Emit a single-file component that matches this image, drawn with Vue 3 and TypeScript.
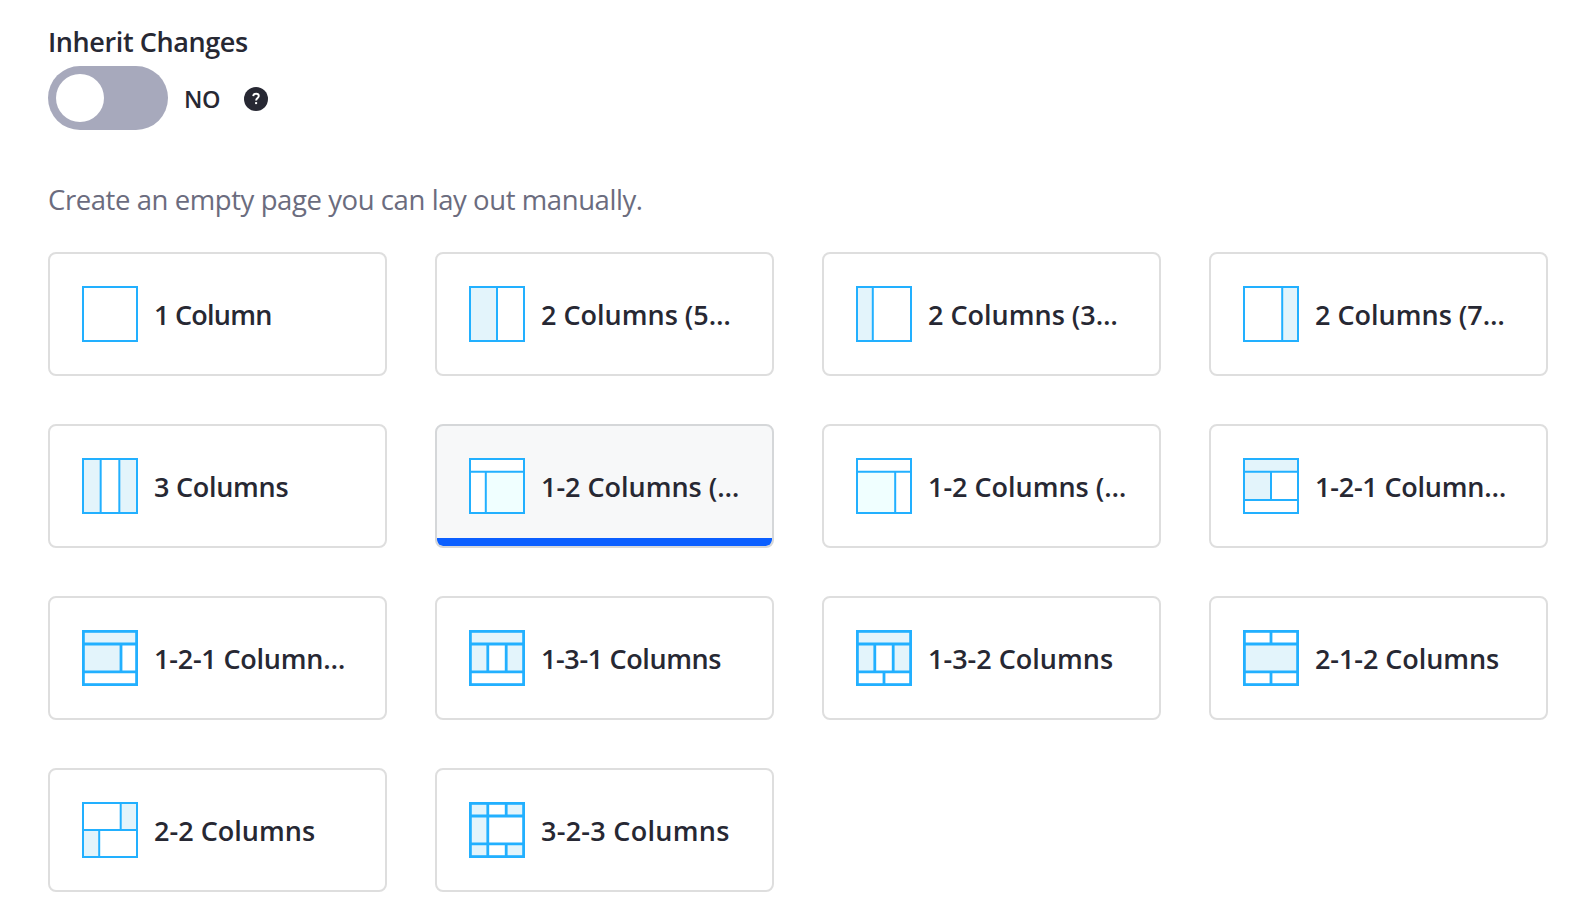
<script setup lang="ts">
interface Template {
  name: string
  // Letter spacing of the label in pixels
  tracking: number
  thick?: boolean
  tint?: string
  // Filled cells as [x, y, width, height]
  fills: number[][]
  lines: string
}

const templates: Template[] = [
  { name: '1 Column', tracking: -0.75, fills: [], lines: '' },
  { name: '2 Columns (5…', tracking: 0, fills: [[0, 0, 28, 56]], lines: 'M28 0V56' },
  { name: '2 Columns (3…', tracking: 0, fills: [[0, 0, 16.8, 56]], lines: 'M16.8 0V56' },
  { name: '2 Columns (7…', tracking: 0, fills: [[39.2, 0, 16.8, 56]], lines: 'M39.2 0V56' },
  { name: '3 Columns', tracking: -0.28, fills: [[0, 0, 18.67, 56], [37.33, 0, 18.67, 56]], lines: 'M18.67 0V56M37.33 0V56' },
  { name: '1-2 Columns (…', tracking: -0.02, tint: '#f0ffff', fills: [[16.8, 13.7, 39.2, 42.3]], lines: 'M0 13.7H56M16.8 13.7V56' },
  { name: '1-2 Columns (…', tracking: -0.02, tint: '#f0ffff', fills: [[0, 13.7, 39.2, 42.3]], lines: 'M0 13.7H56M39.2 13.7V56' },
  { name: '1-2-1 Column…', tracking: -0.22, fills: [[0, 0, 56, 13.7], [0, 13.7, 28, 28.3]], lines: 'M0 13.7H56M0 42H56M28 13.7V42' },
  { name: '1-2-1 Column…', tracking: -0.22, thick: true, fills: [[0, 0, 56, 14], [0, 14, 39.2, 28]], lines: 'M0 14H56M0 41.9H56M39 14V42' },
  { name: '1-3-1 Columns', tracking: -0.38, thick: true, fills: [[0, 0, 56, 14], [0, 14, 18.8, 28], [37.2, 14, 18.8, 28]], lines: 'M0 14H56M0 41.9H56M18.8 14V42M37.2 14V42' },
  { name: '1-3-2 Columns', tracking: 0, thick: true, fills: [[0, 0, 56, 14], [0, 14, 18.8, 28], [37.2, 14, 18.8, 28]], lines: 'M0 14H56M0 41.9H56M18.8 14V42M37.2 14V42M28 42V56' },
  { name: '2-1-2 Columns', tracking: -0.07, thick: true, fills: [[0, 14, 56, 28]], lines: 'M0 14H56M0 41.9H56M28 0V14M28 42V56' },
  { name: '2-2 Columns', tracking: 0.02, fills: [[38.7, 0, 17.3, 28], [0, 28, 17.2, 28]], lines: 'M0 28H56M38.7 0V28M17.2 28V56' },
  { name: '3-2-3 Columns', tracking: 0.27, thick: true, fills: [[0, 0, 18.8, 56], [37.2, 0, 18.8, 14], [37.2, 42, 18.8, 14]], lines: 'M0 14H56M0 41.9H56M18.8 0V56M37.2 0V14M37.2 42V56' },
]
const selected = 5
</script>

<template>
  <main class="page">
    <h2 class="title">Inherit Changes</h2>
    <div class="toggle-row">
      <button class="switch" role="switch" aria-checked="false" aria-label="Inherit Changes"><span class="knob"></span></button>
      <span class="state">NO</span>
      <svg class="help" viewBox="0 0 24 24" aria-label="Help">
        <circle cx="12" cy="12" r="12" />
        <path d="M9.2 9.1C9.4 7.6 10.4 6.8 12 6.8c1.7 0 2.8.9 2.8 2.3 0 1.9-2.7 2-2.7 4.5" />
        <rect x="11.1" y="15.1" width="2" height="2" />
      </svg>
    </div>
    <p class="intro">Create an empty page you can lay out manually.</p>
    <div class="grid">
      <div v-for="(t, i) in templates" :key="i" class="card" :class="{ active: i === selected }">
        <svg class="icon" :class="{ thick: t.thick }" viewBox="0 0 56 56">
          <rect class="base" width="56" height="56" />
          <rect v-for="(f, j) in t.fills" :key="j" :x="f[0]" :y="f[1]" :width="f[2]" :height="f[3]" :fill="t.tint ?? '#e3f4fb'" />
          <path class="line" :d="t.lines" />
          <rect v-if="t.thick" class="line" x="1.4" y="1.4" width="53.2" height="53.2" />
          <rect v-else class="line" x="1" y="1" width="54" height="54" />
        </svg>
        <span class="name" :style="{ letterSpacing: t.tracking + 'px' }">{{ t.name }}</span>
      </div>
    </div>
  </main>
</template>

<style>
body {
  margin: 0;
  background: #fff;
}
</style>

<style scoped>
.page {
  box-sizing: border-box;
  width: 1596px;
  height: 913px;
  padding: 24px 48px 0;
  overflow: hidden;
  font-family: "Open Sans", "Noto Sans", sans-serif;
  color: #272833;
}
.title {
  margin: 0;
  height: 42px;
  line-height: 36px;
  font-size: 27px;
  font-weight: 600;
  letter-spacing: -0.4px;
}
.toggle-row {
  display: flex;
  align-items: center;
  height: 64px;
}
.switch {
  display: flex;
  width: 120px;
  height: 64px;
  padding: 8px;
  border: 0;
  border-radius: 32px;
  background: #a7a9bc;
}
.knob {
  width: 48px;
  height: 48px;
  border-radius: 50%;
  background: #fff;
}
.state {
  width: 60px;
  margin-left: 16px;
  padding-top: 2px;
  font-size: 23.5px;
  font-weight: 600;
  line-height: 32px;
  letter-spacing: -0.5px;
}
.help {
  width: 24px;
  height: 24px;
  margin-top: 2px;
  fill: #272833;
}
.help path {
  fill: none;
  stroke: #fff;
  stroke-width: 1.9;
}
.help rect {
  fill: #fff;
}
.intro {
  margin: 48px 0 0;
  height: 74px;
  line-height: 43px;
  font-size: 27.5px;
  color: #6b6c7e;
  letter-spacing: -0.42px;
}
.grid {
  display: grid;
  grid-template-columns: repeat(4, 339px);
  gap: 48px;
}
.card {
  box-sizing: border-box;
  display: flex;
  align-items: center;
  gap: 16px;
  height: 124px;
  padding: 0 32px;
  border: 2px solid #dedede;
  border-radius: 8px;
  background: #fff;
  overflow: hidden;
}
.card.active {
  border-color: #d5d7d9;
  background: linear-gradient(#0b5fff, #0b5fff) bottom / 100% 8px no-repeat padding-box, #f7f8f9;
}
.icon {
  flex: none;
  width: 56px;
  height: 56px;
}
.base {
  fill: #fff;
}
.line {
  fill: none;
  stroke: #22b0ff;
  stroke-width: 2;
}
.thick .line {
  stroke-width: 2.8;
}
.name {
  padding-top: 2px;
  white-space: nowrap;
  font-size: 27px;
  font-weight: 600;
  line-height: 40px;
}
</style>
